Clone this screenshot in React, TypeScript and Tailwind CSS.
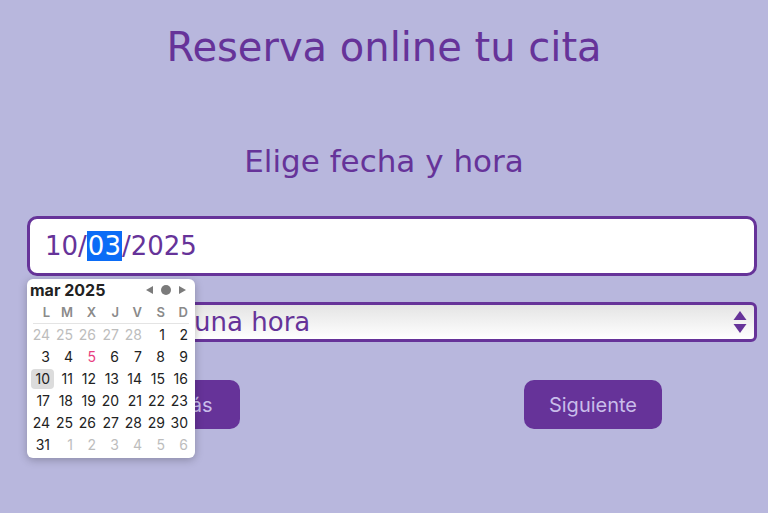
import React from 'react';

const mont = { fontFamily: '"DejaVu Sans", "Noto Sans", sans-serif' };

const weekDays = ['L', 'M', 'X', 'J', 'V', 'S', 'D'];

type Day = { n: number; muted?: boolean; today?: boolean; selected?: boolean };

const days: Day[] = [
  ...[24, 25, 26, 27, 28].map((n) => ({ n, muted: true })),
  ...Array.from({ length: 31 }, (_, i) => ({ n: i + 1, today: i + 1 === 5, selected: i + 1 === 10 })),
  ...[1, 2, 3, 4, 5, 6].map((n) => ({ n, muted: true })),
];

const DatePopup = () => {
  return (
    <div className="absolute left-0 top-full mt-[3px] w-[168px] h-[179px] bg-white rounded-[6px] shadow-[0_2px_8px_rgba(0,0,0,0.25)] font-['Inter','Liberation_Sans',sans-serif] z-10">
      <div className="flex items-center justify-between h-[22px] pl-[3px] pr-[8px]">
        <span className="text-[16px] font-bold text-[#222]">mar 2025</span>
        <div className="flex items-center gap-[7px] text-[#7b7b7b]">
          <svg width="9" height="10" viewBox="0 0 9 10"><path d="M8 1 L1 5 L8 9 Z" fill="currentColor" /></svg>
          <span className="block w-[10px] h-[10px] rounded-full bg-[#7b7b7b]"></span>
          <svg width="9" height="10" viewBox="0 0 9 10"><path d="M1 1 L8 5 L1 9 Z" fill="currentColor" /></svg>
        </div>
      </div>
      <div className="grid grid-cols-[repeat(7,23px)] mt-[2px] ml-[4px] h-[20px] items-center">
        {weekDays.map((d) => (
          <span key={d} className="text-right pr-[4px] text-[13px] font-semibold text-[#8a8a8a]">{d}</span>
        ))}
      </div>
      <div className="mx-[6px] border-t border-[#e4e4e4]"></div>
      <div className="grid grid-cols-[repeat(7,23px)] ml-[4px]">
        {days.map((d, i) => (
          <div key={i} className="h-[22px] flex items-center">
            <span
              className={
                'w-full h-[20px] leading-[20px] text-right pr-[4px] text-[14px] rounded-[4px] ' +
                (d.muted ? 'text-[#bdbdbd]' : d.today ? 'text-[#e8407f]' : 'text-[#222]') +
                (d.selected ? ' bg-[#dcdcdc]' : '')
              }
            >
              {d.n}
            </span>
          </div>
        ))}
      </div>
    </div>
  );
};

export default function App() {
  return (
    <div className="w-[768px] h-[513px] bg-[#b8b7dd] overflow-hidden text-[#663399]" style={mont}>
      <h1 className="text-center text-[40px] leading-[48px] pt-[23px]">Reserva online tu cita</h1>
      <h2 className="text-center text-[31px] leading-[36px] mt-[72px]">Elige fecha y hora</h2>

      <div className="pl-[27px] pr-[11px] mt-[37px]">
        <div className="relative">
          <div className="h-[60px] bg-white border-[3px] border-[#663399] rounded-[10px] flex items-center pl-[15px] text-[26px]">
            <span>10/</span>
            <span className="bg-[#0b6cf6] text-white h-[30px] leading-[30px] px-[1px]">03</span>
            <span>/2025</span>
          </div>
          <DatePopup />
        </div>

        <div className="mt-[26px] h-[40px] border-[3px] border-[#663399] rounded-[6px] bg-gradient-to-b from-[#e4e4e4] to-white flex items-center justify-between pl-[16px] pr-[7px]">
          <span className="text-[26px] leading-[30px]">Selecciona una hora</span>
          <svg width="14" height="26" viewBox="0 0 14 26">
            <path d="M7 2 L13.5 11 L0.5 11 Z" fill="#663399" />
            <path d="M0.5 15 L13.5 15 L7 24 Z" fill="#663399" />
          </svg>
        </div>
      </div>

      <div className="flex mt-[38px] pl-[136px] font-['Inter','Liberation_Sans',sans-serif]">
        <button className="w-[104px] h-[49px] rounded-[10px] bg-[#663399] text-[#c9bdea] text-[20px]">Atrás</button>
        <button className="ml-[284px] w-[138px] h-[49px] rounded-[10px] bg-[#663399] text-[#c9bdea] text-[20px]">Siguiente</button>
      </div>
    </div>
  );
}
